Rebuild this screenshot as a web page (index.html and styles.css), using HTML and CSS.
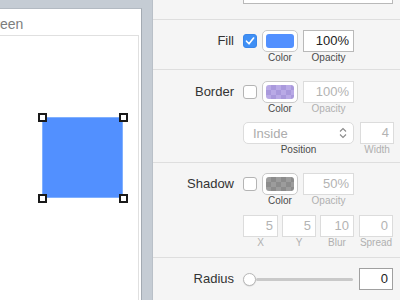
FILE: index.html
```
<!DOCTYPE html>
<html>
<head>
<meta charset="utf-8">
<link rel="stylesheet" href="styles.css">
</head>
<body>
<div class="app">
  <div class="stage">
    <div class="doc">
      <div class="doc-title"><span class="doc-name">Screen</span></div>
      <div class="canvas">
        <div class="shape"></div>
        <span class="handle h-tl"></span>
        <span class="handle h-tr"></span>
        <span class="handle h-bl"></span>
        <span class="handle h-br"></span>
      </div>
    </div>
  </div>
  <div class="panel">
    <section class="sec sec-top">
      <div class="lbl">Opacity</div>
      <div class="ctrls ctrls-top"><span class="num num-top"></span></div>
    </section>

    <section class="sec sec-fill">
      <div class="lbl">Fill</div>
      <div class="ctrls">
        <span class="check on"><svg width="14" height="14" viewBox="0 0 14 14"><polyline points="3.5,7.2 6,9.8 10.6,4" fill="none" stroke="#fff" stroke-width="1.6" stroke-linecap="round" stroke-linejoin="round"/></svg></span>
        <div class="field w36"><span class="swatch"><span class="chip chip-blue"></span></span><span class="cap">Color</span></div>
        <div class="field w51"><span class="num">100%</span><span class="cap">Opacity</span></div>
      </div>
    </section>

    <section class="sec sec-border">
      <div class="lbl">Border</div>
      <div class="ctrls">
        <span class="check"></span>
        <div class="field w36"><span class="swatch"><span class="chip chip-purple"></span></span><span class="cap">Color</span></div>
        <div class="field w51"><span class="num off">100%</span><span class="cap off">Opacity</span></div>
      </div>
      <div class="lbl"></div>
      <div class="ctrls row2">
        <div class="field w111">
          <span class="select">Inside<svg class="chev" width="8" height="12" viewBox="0 0 8 12"><polyline points="1,4.5 4,1.5 7,4.5" fill="none" stroke="#8a8a8a" stroke-width="1.1"/><polyline points="1,7.5 4,10.5 7,7.5" fill="none" stroke="#8a8a8a" stroke-width="1.1"/></svg></span>
          <span class="cap">Position</span>
        </div>
        <div class="field w34 gap5"><span class="num off">4</span><span class="cap off">Width</span></div>
      </div>
    </section>

    <section class="sec sec-shadow">
      <div class="lbl">Shadow</div>
      <div class="ctrls">
        <span class="check"></span>
        <div class="field w36"><span class="swatch"><span class="chip chip-grey"></span></span><span class="cap">Color</span></div>
        <div class="field w51"><span class="num off">50%</span><span class="cap off">Opacity</span></div>
      </div>
      <div class="lbl"></div>
      <div class="ctrls row2 tight">
        <div class="field w35"><span class="num off">5</span><span class="cap off">X</span></div>
        <div class="field w34"><span class="num off">5</span><span class="cap off">Y</span></div>
        <div class="field w34"><span class="num off">10</span><span class="cap off">Blur</span></div>
        <div class="field w34 gap5"><span class="num off">0</span><span class="cap off">Spread</span></div>
      </div>
    </section>

    <section class="sec sec-radius">
      <div class="lbl">Radius</div>
      <div class="ctrls">
        <div class="slider"><span class="knob"></span><span class="track"></span></div>
        <div class="field w34"><span class="num num-dark">0</span></div>
      </div>
    </section>
  </div>
</div>
</body>
</html>
```
FILE: styles.css
```
* { box-sizing: border-box; }
html, body { margin: 0; padding: 0; }
body {
  width: 400px;
  height: 300px;
  overflow: hidden;
  font-family: "Liberation Sans", Arial, sans-serif;
  background: #c5ccd4;
}
.app {
  display: flex;
  width: 400px;
  height: 300px;
}
.stage {
  width: 152px;
  flex: none;
  overflow: hidden;
  background: #c5ccd4;
  padding-top: 8px;
}
.doc {
  width: 142px;
  height: 300px;
  background: #fff;
  border-top: 1px solid #b3bac2;
  border-right: 1px solid #a3aab2;
  display: flex;
  flex-direction: column;
}
.doc-title {
  height: 26px;
  padding-top: 3px;
  font-size: 14px;
  line-height: 24px;
  color: #7d7d7d;
  white-space: nowrap;
  overflow: hidden;
}
.doc-name { margin-left: -21px; }
.canvas {
  position: relative;
  flex: 1;
  margin-right: 2px;
  border-top: 1px solid #e0e0e0;
  border-right: 1px solid #e0e0e0;
}
.shape {
  position: absolute;
  left: 42px;
  top: 81px;
  width: 81px;
  height: 81px;
  background: #5290ff;
  border: 1px solid #80b0ff;
}
.handle {
  position: absolute;
  width: 9px;
  height: 9px;
  background: #fff;
  border: 2px solid #1a1a1a;
}
.h-tl { left: 38px; top: 77px; }
.h-tr { left: 119px; top: 77px; }
.h-bl { left: 38px; top: 158px; }
.h-br { left: 119px; top: 158px; }

.panel {
  width: 248px;
  flex: none;
  background: #f5f5f5;
  border-left: 1px solid #b9c0c8;
}
.sec {
  display: grid;
  grid-template-columns: 81px 1fr;
  column-gap: 9px;
  border-bottom: 1px solid #dedede;
  align-items: start;
}
.lbl {
  font-size: 13px;
  line-height: 22px;
  height: 22px;
  text-align: right;
  color: #333;
  white-space: nowrap;
}
.ctrls {
  display: flex;
  align-items: flex-start;
  gap: 5px;
}
.ctrls.tight { gap: 4px; }
.gap5 { margin-left: 1px; }

.sec-top { height: 20px; }
.sec-top .lbl, .sec-top .ctrls { margin-top: -18px; }
.ctrls-top { justify-content: flex-end; padding-right: 7px; }
.num-top { width: 47px; }

.sec-fill { padding: 10px 0 5px; }
.sec-border { padding: 11px 0 6px; }
.sec-border .row2 { margin-top: 7px; }
.sec-shadow { padding: 10px 0 8px; }
.sec-shadow .row2 { margin-top: 8px; }
.sec-radius { padding: 10px 0 0; border-bottom: none; }

.check {
  width: 14px;
  height: 14px;
  margin-top: 4px;
  border-radius: 3px;
  border: 1px solid #b4b4b4;
  background: #fff;
  display: block;
}
.check.on {
  background: #3f8ff5;
  border-color: #3a86ea;
}
.check svg { display: block; margin: -1px; }

.field {
  display: flex;
  flex-direction: column;
  align-items: center;
}
.w36 { width: 36px; }
.w51 { width: 51px; }
.w111 { width: 111px; }
.w35 { width: 35px; }
.w34 { width: 34px; }

.swatch {
  display: block;
  width: 36px;
  height: 22px;
  padding: 3px;
  background: #fff;
  border: 1px solid #c9c9c9;
  border-radius: 5px;
}
.chip {
  display: block;
  width: 100%;
  height: 100%;
  border-radius: 3px;
}
.chip-blue { background: #5290ff; }
.chip-purple {
  background-color: #b9aae6;
  background-image:
    linear-gradient(45deg, #a999dc 25%, transparent 25%, transparent 75%, #a999dc 75%),
    linear-gradient(45deg, #a999dc 25%, transparent 25%, transparent 75%, #a999dc 75%);
  background-size: 10px 10px;
  background-position: 0 0, 5px 5px;
}
.chip-grey {
  background-color: #9c9c9c;
  background-image:
    linear-gradient(45deg, #8c8c8c 25%, transparent 25%, transparent 75%, #8c8c8c 75%),
    linear-gradient(45deg, #8c8c8c 25%, transparent 25%, transparent 75%, #8c8c8c 75%);
  background-size: 10px 10px;
  background-position: 0 0, 5px 5px;
}

.num {
  display: block;
  width: 100%;
  height: 22px;
  background: #fff;
  border: 1px solid #b9b9b9;
  font-size: 13px;
  line-height: 20px;
  text-align: right;
  padding-right: 4px;
  color: #222;
}
.num.off {
  border-color: #dcdcdc;
  color: #b3b3b3;
}
.num-dark { border-color: #a0a0a0; }

.cap {
  font-size: 10px;
  line-height: 12px;
  height: 12px;
  color: #4a4a4a;
  white-space: nowrap;
}
.cap.off { color: #b0b0b0; }

.select {
  position: relative;
  display: flex;
  align-items: center;
  width: 100%;
  height: 22px;
  padding-left: 9px;
  background: #fff;
  border: 1px solid #dcdcdc;
  border-radius: 5px;
  font-size: 13px;
  color: #acacac;
}
.chev {
  position: absolute;
  right: 6px;
  top: 4px;
}

.slider {
  width: 110px;
  height: 22px;
  display: flex;
  align-items: center;
  margin-right: 1px;
}
.knob {
  width: 13px;
  height: 13px;
  flex: none;
  border-radius: 50%;
  background: #fff;
  border: 1px solid #b8b8b8;
  box-shadow: 0 0.5px 1px rgba(0,0,0,0.15);
}
.track {
  flex: 1;
  height: 3px;
  border-radius: 2px;
  background: #c9c9c9;
}
```
